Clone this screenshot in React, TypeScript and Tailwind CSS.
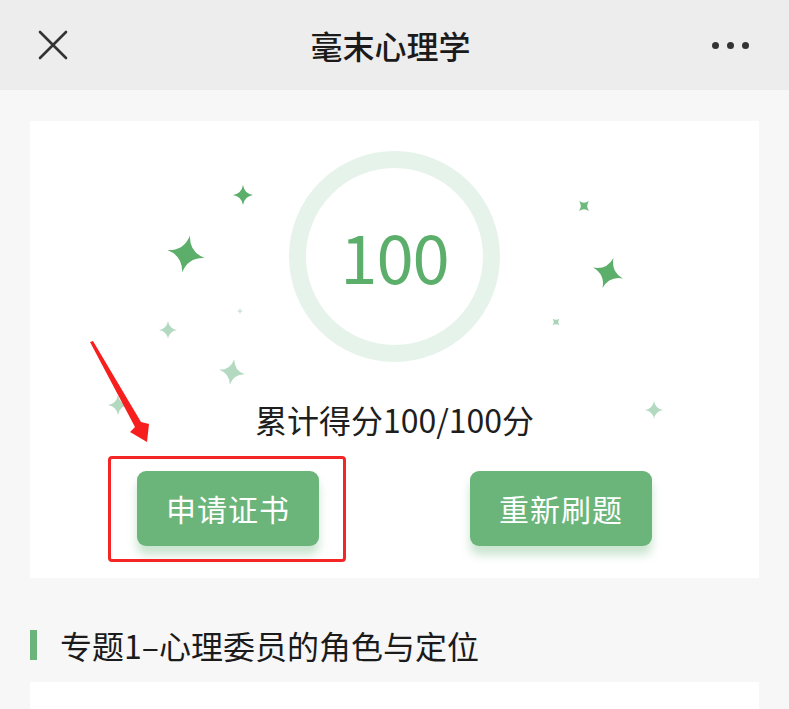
import React from 'react';

const font = { fontFamily: '"Noto Sans CJK SC", "Noto Sans", sans-serif' };

interface Star {
  x: number;
  y: number;
  r: number;
  rot: number;
  color: string;
}

const stars: Star[] = [
  { x: 213, y: 74, r: 10, rot: 0, color: '#5cae6b' },
  { x: 156, y: 133, r: 19, rot: 12, color: '#5cae6b' },
  { x: 138, y: 209, r: 9, rot: 0, color: '#b3dac0' },
  { x: 210, y: 190, r: 3, rot: 0, color: '#cfe6d6' },
  { x: 202, y: 251, r: 13, rot: 10, color: '#b3dac0' },
  { x: 88, y: 284, r: 10, rot: 0, color: '#b3dac0' },
  { x: 554, y: 85, r: 7, rot: 45, color: '#6fb87e' },
  { x: 578, y: 152, r: 16, rot: 20, color: '#5cae6b' },
  { x: 526, y: 201, r: 5, rot: 45, color: '#a9d3b5' },
  { x: 624, y: 289, r: 9, rot: 0, color: '#b3dac0' },
];

function Sparkle({ x, y, r, rot, color }: Star) {
  const k = r * 0.14;
  return (
    <path
      transform={`translate(${x} ${y}) rotate(${rot})`}
      d={`M0 ${-r} Q${k} ${-k} ${r} 0 Q${k} ${k} 0 ${r} Q${-k} ${k} ${-r} 0 Q${-k} ${-k} 0 ${-r}Z`}
      fill={color}
    />
  );
}

function Header() {
  return (
    <div className="h-[90px] bg-[#ededed] flex items-center justify-between px-[38px]">
      <svg width="32" height="32" viewBox="0 0 32 32" className="-ml-[1px]">
        <path d="M3 3 L29 29 M29 3 L3 29" stroke="#333" strokeWidth="2.6" strokeLinecap="round" />
      </svg>
      <div className="text-[32px] text-[#1b1b1b] font-medium leading-none">毫末心理学</div>
      <div className="flex gap-[8px] mr-[2px]">
        <span className="w-[7px] h-[7px] rounded-full bg-[#333]" />
        <span className="w-[7px] h-[7px] rounded-full bg-[#333]" />
        <span className="w-[7px] h-[7px] rounded-full bg-[#333]" />
      </div>
    </div>
  );
}

function GreenButton({ label }: { label: string }) {
  return (
    <div className="w-[182px] h-[75px] rounded-[9px] bg-[#6bb57a] text-white text-[30px] flex items-center justify-center tracking-[1px] shadow-[0_9px_10px_rgba(107,181,122,0.35)]">
      {label}
    </div>
  );
}

export default function App() {
  return (
    <div className="min-h-screen bg-[#f7f7f7]" style={font}>
      <Header />
      <div className="px-[30px] pt-[31px]">
        <div className="relative bg-white h-[457px] flex flex-col items-center">
          <svg className="absolute left-0 top-0" width="728" height="457">
            {stars.map((s, i) => (
              <Sparkle key={i} {...s} />
            ))}
          </svg>

          <div className="relative mt-[30px] w-[211px] h-[211px] rounded-full border-[17px] border-[#e6f3ea] flex items-center justify-center">
            <span className="text-[67px] text-[#5cae6b] leading-none tracking-[-1px] -mt-[4px]">100</span>
          </div>

          <div className="relative mt-[37px] text-[32px] leading-[40px] text-[#1e1e1e]">累计得分100/100分</div>

          <div className="relative mt-[32px] flex gap-[151px]">
            <div className="relative">
              <GreenButton label="申请证书" />
              <span className="absolute -left-[29px] -right-[27px] -top-[15px] -bottom-[16px] border-[3px] border-[#f42525] rounded-[4px]" />
            </div>
            <GreenButton label="重新刷题" />
          </div>

          <svg className="absolute left-0 top-0 pointer-events-none" width="728" height="457">
            <polygon points="60,221 63,220 111,301 119,303 117,321 100,311 105,306" fill="#f71e1e" />
          </svg>
        </div>

        <div className="mt-[47px] flex items-center">
          <span className="w-[7px] h-[30px] bg-[#6bb57a]" />
          <span className="ml-[23px] text-[32px] leading-[40px] text-[#1b1b1b]">专题1–心理委员的角色与定位</span>
        </div>

        <div className="mt-[17px] bg-white h-[200px]" />
      </div>
    </div>
  );
}
